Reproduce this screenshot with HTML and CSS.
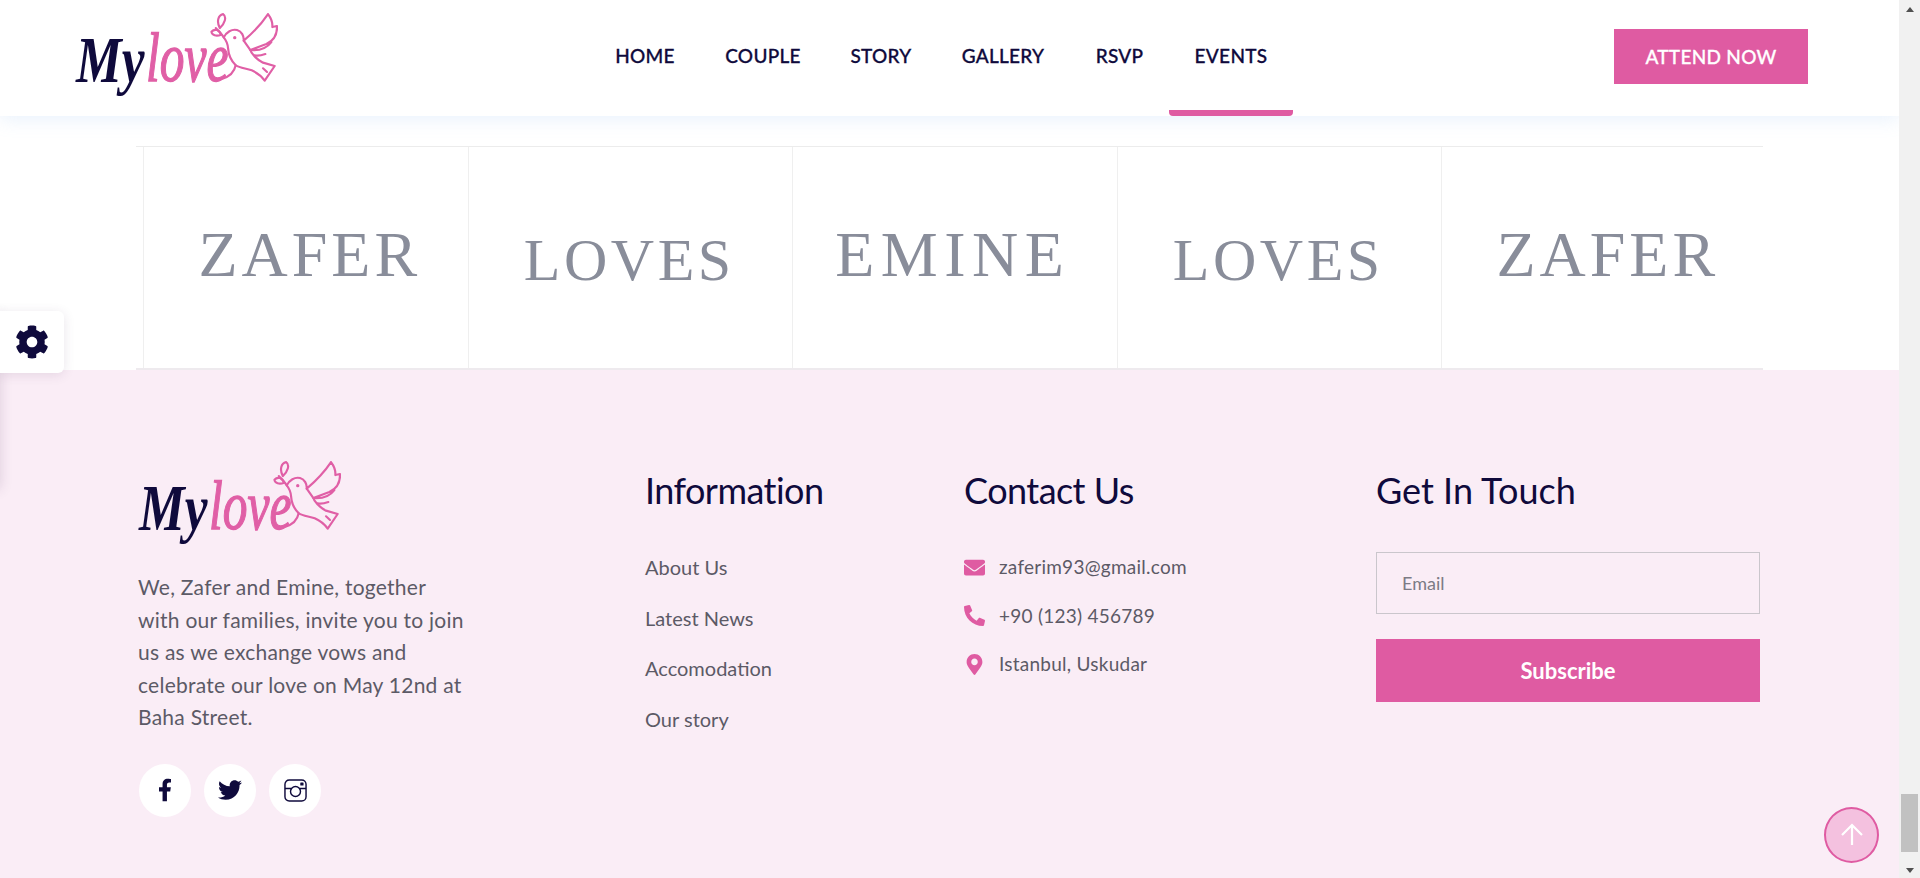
FILE: index.html
```html
<!DOCTYPE html>
<html lang="en">
<head>
<meta charset="utf-8">
<title>Mylove</title>
<link rel="stylesheet" href="styles.css">
</head>
<body>
<svg class="defs" width="0" height="0" aria-hidden="true">
  <symbol id="dove" viewBox="228 39 607 267">
    <g class="dove">
      <path d="M668 236 C690 230 704 214 708 196 C692 180 686 160 685 145 C684 130 680 122 672 112 C680 96 696 86 712 90 C726 94 733 108 732 122 C760 98 785 72 805 42 C815 55 819 68 818 81 L832 78 C833 100 826 120 800 132 L752 150 C775 152 800 146 815 126"/>
      <path d="M732 122 L752 150 C754 160 770 178 790 188 L825 198 L795 242 C785 228 772 218 756 211 C738 205 720 203 708 196"/>
      <path d="M765 166 C775 168 785 166 797 162"/>
      <path d="M790 205 L802 216"/>
      <path d="M672 112 C665 100 655 92 648 84"/>
      <path d="M660 84 C650 65 655 45 670 42 C682 50 675 72 660 84 Z"/>
      <path d="M664 104 C650 110 636 106 635 95 C645 84 660 90 664 104 Z"/>
      <circle class="dove-eye" cx="705" cy="113" r="5"/>
    </g>
  </symbol>
</svg>

<div class="page">
  <header class="site-header">
    <a class="logo-link" href="#">
      <svg class="logo" viewBox="228 39 607 267">
        <text class="logo-my" x="228" y="245" textLength="206" lengthAdjust="spacingAndGlyphs">My</text>
        <text class="logo-love" x="438" y="242" textLength="248" lengthAdjust="spacingAndGlyphs">love</text>
        <use href="#dove" x="228" y="39" width="607" height="267"/>
      </svg>
    </a>
    <nav class="main-nav">
      <a class="nav-item" href="#">Home</a>
      <a class="nav-item" href="#">Couple</a>
      <a class="nav-item" href="#">Story</a>
      <a class="nav-item" href="#">Gallery</a>
      <a class="nav-item" href="#">RSVP</a>
      <a class="nav-item is-active" href="#">Events</a>
    </nav>
    <a class="attend-btn" href="#">Attend Now</a>
  </header>

  <section class="brands">
    <div class="brand-cell"><span class="brand-word word-zafer">zafer</span></div>
    <div class="brand-cell"><span class="brand-word word-loves">loves</span></div>
    <div class="brand-cell"><span class="brand-word word-emine">emine</span></div>
    <div class="brand-cell"><span class="brand-word word-loves">loves</span></div>
    <div class="brand-cell"><span class="brand-word word-zafer">zafer</span></div>
  </section>

  <footer class="site-footer">
    <div class="about-col">
      <svg class="logo" viewBox="228 39 607 267">
        <text class="logo-my" x="228" y="245" textLength="206" lengthAdjust="spacingAndGlyphs">My</text>
        <text class="logo-love" x="438" y="242" textLength="248" lengthAdjust="spacingAndGlyphs">love</text>
        <use href="#dove" x="228" y="39" width="607" height="267"/>
      </svg>
      <p class="about-text">We, Zafer and Emine, together<br>with our families, invite you to join<br>us as we exchange vows and<br>celebrate our love on May 12nd at<br>Baha Street.</p>
      <div class="socials">
        <a class="social" href="#" aria-label="Facebook"><svg class="fb" viewBox="0 0 320 512"><path d="M279.14 288l14.22-92.66h-88.91v-60.13c0-25.35 12.42-50.06 52.24-50.06h40.42V6.26S260.43 0 225.36 0c-73.22 0-121.08 44.38-121.08 124.72v70.62H22.89V288h81.39v224h100.17V288z"/></svg></a>
        <a class="social" href="#" aria-label="Twitter"><svg class="tw" viewBox="0 0 512 512"><path d="M459.37 151.716c.325 4.548.325 9.097.325 13.645 0 138.72-105.583 298.558-298.558 298.558-59.452 0-114.68-17.219-161.137-47.106 8.447.974 16.568 1.299 25.34 1.299 49.055 0 94.213-16.568 130.274-44.832-46.132-.975-84.792-31.188-98.112-72.772 6.498.974 12.995 1.624 19.818 1.624 9.421 0 18.843-1.3 27.614-3.573-48.081-9.747-84.143-51.98-84.143-102.985v-1.299c13.969 7.797 30.214 12.67 47.431 13.319-28.264-18.843-46.781-51.005-46.781-87.391 0-19.492 5.197-37.36 14.294-52.954 51.655 63.675 129.3 105.258 216.365 109.807-1.624-7.797-2.599-15.918-2.599-24.04 0-57.828 46.782-104.934 104.934-104.934 30.213 0 57.502 12.67 76.67 33.137 23.715-4.548 46.456-13.32 66.599-25.34-7.798 24.366-24.366 44.833-46.132 57.827 21.117-2.273 41.584-8.122 60.426-16.243-14.292 20.791-32.161 39.308-52.628 54.253z"/></svg></a>
        <a class="social" href="#" aria-label="Instagram"><svg class="ig" viewBox="0 0 24 24"><rect x="1" y="1" width="22" height="22" rx="4.5"/><circle cx="12" cy="13" r="5.2"/><path d="M1 10 H7.5 M16.5 10 H23"/><rect class="ig-dot" x="17" y="3.6" width="3.4" height="3.2" rx=".6"/></svg></a>
      </div>
    </div>

    <div class="links-col">
      <h3 class="col-title col-title-tight">Information</h3>
      <ul class="link-list">
        <li><a href="#">About Us</a></li>
        <li><a href="#">Latest News</a></li>
        <li><a href="#">Accomodation</a></li>
        <li><a href="#">Our story</a></li>
      </ul>
    </div>

    <div class="contact-col">
      <h3 class="col-title col-title-tight">Contact Us</h3>
      <ul class="contact-list">
        <li><svg class="contact-icon" viewBox="0 0 512 512"><path d="M502.3 190.8c3.9-3.1 9.7-.2 9.7 4.7V400c0 26.5-21.5 48-48 48H48c-26.5 0-48-21.5-48-48V195.6c0-5 5.7-7.8 9.7-4.7 22.4 17.4 52.1 39.5 154.1 113.6 21.1 15.4 56.7 47.8 92.2 47.6 35.7.3 72-32.8 92.3-47.6 102-74.1 131.6-96.3 154-113.7zM256 320c23.2.4 56.6-29.2 73.4-41.4 132.7-96.3 142.8-104.7 173.4-128.7 5.8-4.5 9.2-11.5 9.2-18.9v-19c0-26.5-21.5-48-48-48H48C21.5 64 0 85.5 0 112v19c0 7.4 3.4 14.3 9.2 18.9 30.6 23.9 40.7 32.4 173.4 128.7 16.8 12.2 50.2 41.8 73.4 41.4z"/></svg><span>zaferim93@gmail.com</span></li>
        <li><svg class="contact-icon" viewBox="0 0 512 512"><path transform="matrix(-1 0 0 1 512 0)" d="M493.4 24.6l-104-24c-11.3-2.6-22.9 3.3-27.5 13.9l-48 112c-4.2 9.8-1.4 21.3 6.9 28l60.6 49.6c-36 76.7-98.9 140.5-177.2 177.2l-49.6-60.6c-6.8-8.3-18.2-11.1-28-6.9l-112 48C3.9 366.5-2 378.1.6 389.4l24 104C27.1 504.2 36.7 512 48 512c256.1 0 464-207.5 464-464 0-11.2-7.7-20.9-18.6-23.4z"/></svg><span>+90 (123) 456789</span></li>
        <li><svg class="contact-icon" viewBox="0 0 384 512"><path d="M172.268 501.67C26.97 291.031 0 262.425 0 192 0 85.961 85.961 0 192 0s192 85.961 192 192c0 70.425-26.97 99.031-172.268 309.67-9.535 13.774-29.93 13.773-39.464 0zM192 272c44.183 0 80-35.817 80-80s-35.817-80-80-80-80 35.817-80 80 35.817 80 80 80z"/></svg><span>Istanbul, Uskudar</span></li>
      </ul>
    </div>

    <div class="touch-col">
      <h3 class="col-title">Get In Touch</h3>
      <form class="subscribe">
        <input class="email-input" type="text" placeholder="Email">
        <button class="subscribe-btn" type="button">Subscribe</button>
      </form>
    </div>
  </footer>

  <div class="settings-panel"></div>
  <button class="settings-tab" type="button" aria-label="Settings"><svg class="gear" viewBox="0 0 512 512"><path d="M487.4 315.7l-42.6-24.6c4.3-23.2 4.3-47 0-70.2l42.6-24.6c4.9-2.8 7.1-8.6 5.5-14-11.1-35.6-30-67.8-54.7-94.6-3.8-4.1-10-5.1-14.8-2.3L380.8 110c-17.9-15.4-38.5-27.3-60.8-35.1V25.8c0-5.6-3.9-10.5-9.4-11.7-36.7-8.2-74.3-7.8-109.2 0-5.5 1.2-9.4 6.1-9.4 11.7V75c-22.2 7.9-42.8 19.8-60.8 35.1L88.7 85.5c-4.9-2.8-11-1.9-14.8 2.3-24.7 26.7-43.6 58.9-54.7 94.6-1.7 5.4.6 11.2 5.5 14L67.3 221c-4.3 23.2-4.3 47 0 70.2l-42.6 24.6c-4.9 2.8-7.1 8.6-5.5 14 11.1 35.6 30 67.8 54.7 94.6 3.8 4.1 10 5.1 14.8 2.3l42.6-24.6c17.9 15.4 38.5 27.3 60.8 35.1v49.2c0 5.6 3.9 10.5 9.4 11.7 36.7 8.2 74.3 7.8 109.2 0 5.5-1.2 9.4-6.1 9.4-11.7v-49.2c22.2-7.9 42.8-19.8 60.8-35.1l42.6 24.6c4.9 2.8 11 1.9 14.8-2.3 24.7-26.7 43.6-58.9 54.7-94.6 1.5-5.5-.7-11.3-5.6-14.1zM256 336c-44.1 0-80-35.9-80-80s35.9-80 80-80 80 35.9 80 80-35.9 80-80 80z"/></svg></button>
  <a class="back-top" href="#" aria-label="Back to top"><svg class="back-arrow" viewBox="0 0 24 24"><path d="M12 22 V2 M2 12 L12 2 L22 12"/></svg></a>
</div>

<div class="scrollbar">
  <span class="arrow-up"></span>
  <span class="thumb"></span>
  <span class="arrow-down"></span>
</div>
</body>
</html>
```

FILE: styles.css
```css
* { box-sizing: border-box; }

html, body { height: 100%; }

body {
  margin: 0;
  display: flex;
  height: 878px;
  overflow: hidden;
  background: #fff;
  font-family: "Lato", "Noto Sans", sans-serif;
  color: #5c5a66;
}

a { text-decoration: none; color: inherit; }

.defs { position: absolute; }

.page {
  position: relative;
  flex: 1;
  min-width: 0;
  display: flex;
  flex-direction: column;
  overflow: hidden;
}

/* scrollbar */
.scrollbar {
  flex: 0 0 21px;
  background: #f1f1f1;
  display: flex;
  flex-direction: column;
  align-items: center;
  padding: 7px 0 5px;
}
.arrow-up, .arrow-down {
  width: 0;
  height: 0;
  border-left: 4.5px solid transparent;
  border-right: 4.5px solid transparent;
}
.arrow-up { border-bottom: 5px solid #505050; }
.arrow-down { border-top: 5px solid #505050; }
.thumb {
  width: 17px;
  height: 58px;
  margin-top: auto;
  margin-bottom: 16px;
  background: #c1c1c1;
}

/* header */
.site-header {
  position: relative;
  z-index: 2;
  flex: 0 0 116px;
  display: flex;
  align-items: flex-start;
  padding: 0 91px 0 76px;
  background: #fff;
  box-shadow: 0 3px 18px rgba(140, 185, 240, .2);
}
.logo-link { display: block; margin-top: 13px; }
.logo { display: block; width: 202px; height: 89px; overflow: visible; }
.logo-my, .logo-love {
  font-family: "Liberation Serif", serif;
  font-style: italic;
}
.logo-my { font-size: 196px; font-weight: 700; fill: #0f0a3c; }
.logo-love { font-size: 212px; fill: #e05fa6; stroke: #e05fa6; stroke-width: 4; }
.dove path { fill: none; stroke: #e05fa6; stroke-width: 6.5; stroke-linejoin: round; stroke-linecap: round; }
.dove-eye { fill: #e05fa6; }

.main-nav {
  display: grid;
  grid-template-columns: 110px 126px 110px 134px 99px 124px;
  margin-left: 312px;
}
.nav-item {
  display: block;
  height: 116px;
  padding-top: 44px;
  border-bottom: 6px solid transparent;
  border-radius: 0 0 4px 4px;
  font-size: 19px;
  line-height: 24px;
  font-weight: 500;
  letter-spacing: .3px;
  -webkit-text-stroke: .3px #0f0a3c;
  text-align: center;
  text-transform: uppercase;
  color: #0f0a3c;
}
.nav-item.is-active { border-bottom-color: #df5ba2; }

.attend-btn {
  margin: 29px 0 0 auto;
  width: 194px;
  height: 55px;
  display: flex;
  align-items: center;
  justify-content: center;
  background: #df5ba2;
  color: #fff;
  -webkit-text-stroke: .3px #fff;
  font-size: 19px;
  font-weight: 500;
  letter-spacing: .3px;
  text-transform: uppercase;
}

/* brand strip */
.brands {
  margin: 30px 136px 0 136px;
  padding-left: 7px;
  display: flex;
  flex: 0 0 224px;
  overflow: hidden;
  border-top: 1px solid #ececec;
  border-bottom: 2px solid #eeeaee;
}
.brand-cell {
  flex: 0 0 324.5px;
  border-left: 1px solid #efefef;
  text-align: center;
}
.brand-word {
  display: block;
  font-family: "Liberation Serif", serif;
  color: #898d9a;
  text-transform: uppercase;
  filter: blur(.4px);
  line-height: 60px;
}
.word-zafer { font-size: 64px; letter-spacing: 4px; padding-top: 78px; padding-left: 8px; }
.word-loves { font-size: 60px; letter-spacing: 3.5px; padding-top: 83px; padding-right: 2px; }
.word-emine { font-size: 64px; letter-spacing: 6.5px; padding-top: 78px; padding-right: 4px; }

/* footer */
.site-footer {
  flex: 1;
  display: grid;
  grid-template-columns: 506px 319px 412px 384px;
  align-content: start;
  padding: 91px 0 0 139px;
  background: #faedf6;
}
.about-text {
  margin: 21px 0 0 -1px;
  font-size: 21px;
  letter-spacing: .25px;
  line-height: 32.5px;
}
.socials { display: flex; gap: 13px; margin-top: 30px; }
.social {
  width: 52px;
  height: 53px;
  display: flex;
  align-items: center;
  justify-content: center;
  border-radius: 50%;
  background: #fff;
}
.social svg { display: block; fill: #0f0a3c; }
.fb { width: 14px; height: 24px; }
.tw { width: 24px; height: 24px; }
.ig { width: 23px; height: 23px; fill: none !important; stroke: #0f0a3c; stroke-width: 1.5; }
.ig-dot { fill: #0f0a3c; stroke: none; }

.col-title {
  margin: 0;
  font-size: 36px;
  line-height: 44px;
  font-weight: 400;
  color: #0f0a3c;
  padding-top: 7px;
}
.col-title-tight { letter-spacing: -.55px; }
.link-list, .contact-list { list-style: none; margin: 0; padding: 0; }
.link-list { margin-top: 41px; font-size: 20px; line-height: 28px; }
.link-list li + li { margin-top: 22.7px; }

.contact-list { margin-top: 41px; font-size: 19px; letter-spacing: .25px; line-height: 28px; }
.contact-list li { display: flex; align-items: center; gap: 14px; height: 28px; }
.contact-list li + li { margin-top: 20.5px; }
.contact-icon { flex: 0 0 21px; width: 21px; height: 21px; fill: #df5ba2; }

.subscribe { display: flex; flex-direction: column; margin-top: 40px; }
.email-input {
  height: 62px;
  padding: 0 25px;
  border: 1.5px solid #cac6cc;
  border-radius: 0;
  background: transparent;
  font-family: inherit;
  font-size: 18px;
  outline: none;
}
.email-input::placeholder { color: #7c7b85; opacity: 1; }
.subscribe-btn {
  margin-top: 25px;
  height: 63px;
  border: 0;
  background: #df5ba2;
  color: #fff;
  font-family: inherit;
  font-size: 22px;
  font-weight: 700;
}

/* overlays */
.settings-panel {
  position: absolute;
  left: -200px;
  top: 311px;
  width: 200px;
  height: 176px;
  box-shadow: 0 2px 12px rgba(70, 40, 90, .16);
}
.settings-tab {
  position: absolute;
  left: 0;
  top: 311px;
  width: 64px;
  height: 62px;
  padding: 0 1px 0 0;
  display: flex;
  align-items: center;
  justify-content: center;
  border: 0;
  border-radius: 0 6px 6px 0;
  background: #fff;
  box-shadow: 0 2px 12px rgba(70, 40, 90, .12);
}
.gear { width: 34px; height: 34px; fill: #0f0a3c; }

.back-top {
  position: absolute;
  left: 1824px;
  top: 807px;
  width: 55px;
  height: 56px;
  display: flex;
  align-items: center;
  justify-content: center;
  border: 2px solid #df5ba2;
  border-radius: 50%;
  background: #f4c1df;
}
.back-arrow { width: 24px; height: 24px; fill: none; stroke: #fff; stroke-width: 2.2; }
```
